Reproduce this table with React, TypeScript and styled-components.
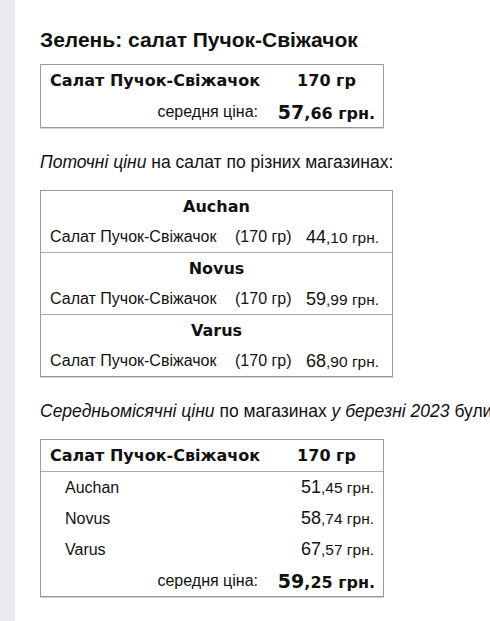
import React from 'react';
import styled, { createGlobalStyle } from 'styled-components';

const GlobalStyle = createGlobalStyle`
  html, body {
    margin: 0;
    padding: 0;
    background: #fff;
    overflow: hidden;
  }
  body {
    font-family: 'Liberation Sans', Arial, sans-serif;
    color: #111;
  }
`;

const Page = styled.div`
  display: flex;
  min-height: 621px;
`;

const Strip = styled.div`
  width: 15px;
  flex-shrink: 0;
  background: #e9ebee;
`;

const Content = styled.main`
  flex: 1;
  padding: 29px 0 0 25px;
  white-space: nowrap;
  overflow: hidden;
`;

const Title = styled.h1`
  margin: 0 0 13px;
  font-size: 21px;
  line-height: 22px;
  font-weight: bold;
  color: #111;
`;

const Box = styled.div<{ $width: number }>`
  width: ${p => p.$width}px;
  box-sizing: border-box;
  border: 1px solid #999;
  box-shadow: 0 1px 0 #d4d4d4;
  background: #fff;
`;

const Row = styled.div<{ $line?: boolean }>`
  display: grid;
  grid-template-columns: 229px 1fr;
  align-items: center;
  height: 31px;
  border-bottom: ${p => (p.$line ? '1px solid #aaa' : 'none')};
`;

const NameBold = styled.span`
  font-family: 'DejaVu Sans', Verdana, sans-serif;
  font-weight: bold;
  font-size: 16px;
  padding-left: 9px;
`;

const Center = styled.span`
  text-align: center;
`;

const Weight = styled.span`
  font-family: 'DejaVu Sans', Verdana, sans-serif;
  font-weight: bold;
  font-size: 16px;
`;

const AvgLabel = styled.span`
  text-align: right;
  font-size: 16px;
  padding-right: 12px;
`;

const BigPrice = styled.span`
  text-align: center;
  font-family: 'DejaVu Sans', Verdana, sans-serif;
  font-weight: bold;
  font-size: 16px;
  b {
    font-size: 19px;
  }
`;

const Para = styled.p`
  margin: 25px 0 19px;
  font-size: 17.5px;
  line-height: 18px;
  em { font-style: italic; }
`;

const StoreHead = styled.div`
  height: 31px;
  display: flex;
  align-items: center;
  justify-content: center;
  font-family: 'DejaVu Sans', Verdana, sans-serif;
  font-weight: bold;
  font-size: 16px;
`;

const StoreBlock = styled.div<{ $last?: boolean }>`
  border-bottom: ${p => (p.$last ? 'none' : '1px solid #aaa')};
`;

const ItemRow = styled.div`
  height: 30px;
  display: grid;
  grid-template-columns: 185px 71px 1fr;
  align-items: center;
  font-size: 16px;
  padding-left: 9px;
`;

const Price = styled.span<{ $align?: 'left' | 'right' }>`
  font-size: 18px;
  text-align: ${p => p.$align || 'left'};
  small {
    font-size: 15.5px;
  }
`;

const ShopRow = styled.div`
  height: 31px;
  display: flex;
  align-items: center;
  justify-content: space-between;
  padding: 0 9px 0 24px;
  font-size: 16px;
`;

const stores = [
  { name: 'Auchan', now: ['44', ',10'], avg: ['51', ',45'] },
  { name: 'Novus', now: ['59', ',99'], avg: ['58', ',74'] },
  { name: 'Varus', now: ['68', ',90'], avg: ['67', ',57'] },
];

const product = 'Салат Пучок-Свіжачок';

export default function App() {
  return (
    <Page>
      <GlobalStyle />
      <Strip />
      <Content>
        <Title>Зелень: салат Пучок-Свіжачок</Title>
        <Box $width={344}>
          <Row>
            <NameBold>{product}</NameBold>
            <Center><Weight>170 гр</Weight></Center>
          </Row>
          <Row>
            <AvgLabel>середня ціна:</AvgLabel>
            <BigPrice><b>57</b>,66 грн.</BigPrice>
          </Row>
        </Box>

        <Para><em>Поточні ціни</em> на салат по різних магазинах:</Para>

        <Box $width={353}>
          {stores.map((s, i) => (
            <StoreBlock key={s.name} $last={i === stores.length - 1}>
              <StoreHead>{s.name}</StoreHead>
              <ItemRow>
                <span>{product}</span>
                <span>(170 гр)</span>
                <Price>{s.now[0]}<small>{s.now[1]} грн.</small></Price>
              </ItemRow>
            </StoreBlock>
          ))}
        </Box>

        <Para>
          <em>Середньомісячні ціни</em> по магазинах <em>у березні 2023</em> були
        </Para>

        <Box $width={344}>
          <Row $line>
            <NameBold>{product}</NameBold>
            <Center><Weight>170 гр</Weight></Center>
          </Row>
          {stores.map(s => (
            <ShopRow key={s.name}>
              <span>{s.name}</span>
              <Price $align="right">{s.avg[0]}<small>{s.avg[1]} грн.</small></Price>
            </ShopRow>
          ))}
          <Row>
            <AvgLabel>середня ціна:</AvgLabel>
            <BigPrice><b>59</b>,25 грн.</BigPrice>
          </Row>
        </Box>
      </Content>
    </Page>
  );
}
